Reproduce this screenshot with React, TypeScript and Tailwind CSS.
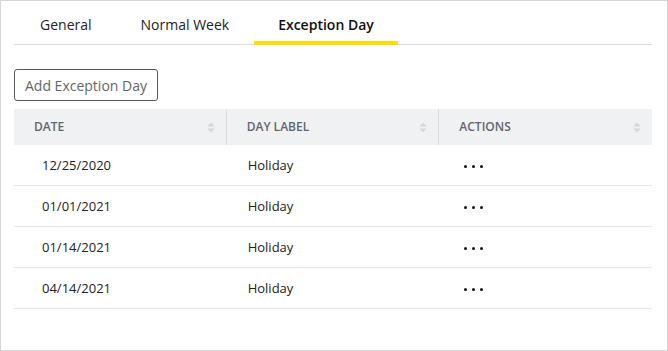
import { useState } from "react";

const tabs = ["General", "Normal Week", "Exception Day"];

const rows = [
  { date: "12/25/2020", label: "Holiday" },
  { date: "01/01/2021", label: "Holiday" },
  { date: "01/14/2021", label: "Holiday" },
  { date: "04/14/2021", label: "Holiday" },
];

function SortIcon() {
  return (
    <svg width="8" height="11" viewBox="0 0 8 11" className="shrink-0">
      <path d="M4 0.5 L7.5 4.5 H0.5 Z" fill="#d4d6da" />
      <path d="M4 10.5 L7.5 6.5 H0.5 Z" fill="#d4d6da" />
    </svg>
  );
}

function Dots() {
  return (
    <div className="flex items-center gap-[5px] pt-[3px]">
      <span className="h-[3px] w-[3px] rounded-full bg-[#111]" />
      <span className="h-[3px] w-[3px] rounded-full bg-[#111]" />
      <span className="h-[3px] w-[3px] rounded-full bg-[#111]" />
    </div>
  );
}

export default function App() {
  const [tab, setTab] = useState("Exception Day");

  return (
    <div
      className="h-[351px] w-[668px] border border-[#d6d6d6] bg-white pl-[13px] pr-[15px]"
      style={{ fontFamily: '"Open Sans", "Noto Sans", sans-serif' }}
    >
      <div className="flex h-[44px] gap-[1px] border-b border-[#dcdcdc] pl-[2px]">
        {tabs.map((t) => (
          <button
            key={t}
            onClick={() => setTab(t)}
            className={`relative px-6 pt-[5px] text-[14px] leading-none ${
              tab === t ? "font-semibold text-[#111]" : "text-[#222]"
            }`}
          >
            {t}
            {tab === t && <span className="absolute bottom-[-1px] left-0 right-0 h-[4px] bg-[#ffdd00]" />}
          </button>
        ))}
      </div>

      <button className="mt-[24px] h-[32px] rounded-[3px] border border-[#5a5a5a] px-[10px] text-[14px] text-[#666]">
        Add Exception Day
      </button>

      <div className="mt-[8px]">
        <div className="grid h-[36px] grid-cols-3 bg-[#f0f1f3] text-[12px] font-semibold uppercase text-[#5f6670]">
          {["Date", "Day Label", "Actions"].map((h, i) => (
            <div
              key={h}
              className={`flex items-center justify-between pl-[20px] pr-[11px] ${i < 2 ? "border-r border-[#dadce0]" : ""}`}
            >
              <span>{h}</span>
              <SortIcon />
            </div>
          ))}
        </div>
        {rows.map((r) => (
          <div key={r.date} className="grid h-[41px] grid-cols-3 border-b border-[#e6e6e6] text-[13px] text-[#222]">
            <div className="flex items-center pl-[28px] pt-[1px]">{r.date}</div>
            <div className="flex items-center pl-[21px] pt-[1px]">{r.label}</div>
            <div className="flex items-center pl-[25px]">
              <Dots />
            </div>
          </div>
        ))}
      </div>
    </div>
  );
}
